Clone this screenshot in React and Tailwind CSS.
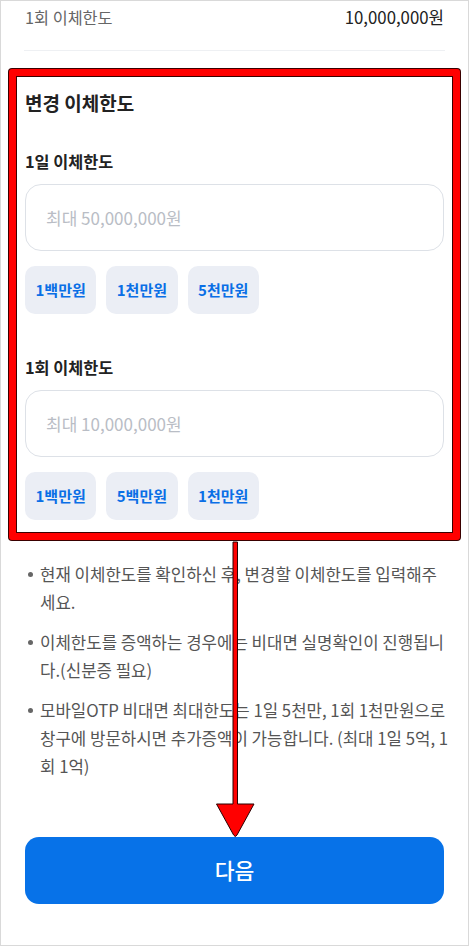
const FONT = { fontFamily: '"Noto Sans CJK KR", "Noto Sans", sans-serif' };

function Chip({ label }) {
  return (
    <button
      type="button"
      className="h-12 px-[10.5px] rounded-[10px] bg-[#ebeef5] text-[15px] font-bold text-[#0a6fe6]"
    >
      {label}
    </button>
  );
}

function LimitField({ label, placeholder, chips, className }) {
  return (
    <div className={className}>
      <p className="text-[16.3px] leading-6 font-bold text-[#222]">{label}</p>
      <div className="mt-[11px] h-[67px] rounded-[16px] border border-[#dde1e7] bg-white flex items-center px-[20px]">
        <span className="text-[17px] text-[#b9bdc5]">{placeholder}</span>
      </div>
      <div className="mt-[15px] flex gap-[10px]">
        {chips.map((c) => (
          <Chip key={c} label={c} />
        ))}
      </div>
    </div>
  );
}

// lines kept as they wrap in the app
const NOTES = [
  ["현재 이체한도를 확인하신 후, 변경할 이체한도를 입력해주", "세요."],
  ["이체한도를 증액하는 경우에는 비대면 실명확인이 진행됩니", "다.(신분증 필요)"],
  [
    "모바일OTP 비대면 최대한도는 1일 5천만, 1회 1천만원으로",
    "창구에 방문하시면 추가증액이 가능합니다. (최대 1일 5억, 1",
    "회 1억)",
  ],
];

export default function App() {
  return (
    <div
      className="relative w-[469px] h-[946px] overflow-hidden bg-white border border-[#d9d9d9]"
      style={FONT}
    >
      {/* current limit row */}
      <div className="h-[33px] px-[24px] flex items-center justify-between">
        <span className="text-[16.3px] text-[#666]">1회 이체한도</span>
        <span className="text-[16.8px] text-[#222]">10,000,000원</span>
      </div>
      <div className="mx-[23px] mt-[16px] h-px bg-[#eef0f3]" />

      {/* highlighted section */}
      <div className="mx-[7px] mt-[17px] rounded-[4px] bg-[#3a0000] p-px">
        <div className="rounded-[3px] bg-[#ff0000] p-[7px]">
          <div className="bg-[#3a0000] p-px">
            <div className="bg-white px-[8px] pt-[12px] pb-[12px]">
              <h2 className="text-[19px] leading-7 font-bold text-[#222]">변경 이체한도</h2>
              <LimitField
                className="mt-[32px]"
                label="1일 이체한도"
                placeholder="최대 50,000,000원"
                chips={["1백만원", "1천만원", "5천만원"]}
              />
              <LimitField
                className="mt-[41px]"
                label="1회 이체한도"
                placeholder="최대 10,000,000원"
                chips={["1백만원", "5백만원", "1천만원"]}
              />
            </div>
          </div>
        </div>
      </div>

      {/* notes */}
      <ul className="mt-[19px] pl-[24px] pr-[10px] flex flex-col gap-[12px]">
        {NOTES.map((lines) => (
          <li key={lines[0]} className="flex text-[16.75px] leading-[28px] text-[#555]">
            <span className="w-[15px] shrink-0 flex items-start pt-[12px]">
              <span className="block w-[5px] h-[5px] rounded-full bg-[#666] ml-[3px]" />
            </span>
            <span className="whitespace-nowrap">
              {lines.map((l, i) => (
                <span key={i} className="block">
                  {l}
                </span>
              ))}
            </span>
          </li>
        ))}
      </ul>

      <div className="px-[24px] mt-[57px]">
        <button
          type="button"
          className="w-full h-[67px] rounded-[14px] bg-[#0772e8] text-white text-[21.5px] font-medium"
        >
          다음
        </button>
      </div>

      {/* annotation arrow */}
      <svg
        className="absolute left-0 top-0 pointer-events-none"
        width="469"
        height="946"
        viewBox="0 0 469 946"
      >
        <path
          d="M232 541 L236.5 541 L236.5 803 L253 803 L236 834 Q234.3 837 232.6 834 L215.5 803 L232 803 Z"
          fill="#ff0000"
          stroke="#2a0000"
          strokeWidth="1"
          strokeLinejoin="round"
        />
      </svg>
    </div>
  );
}
